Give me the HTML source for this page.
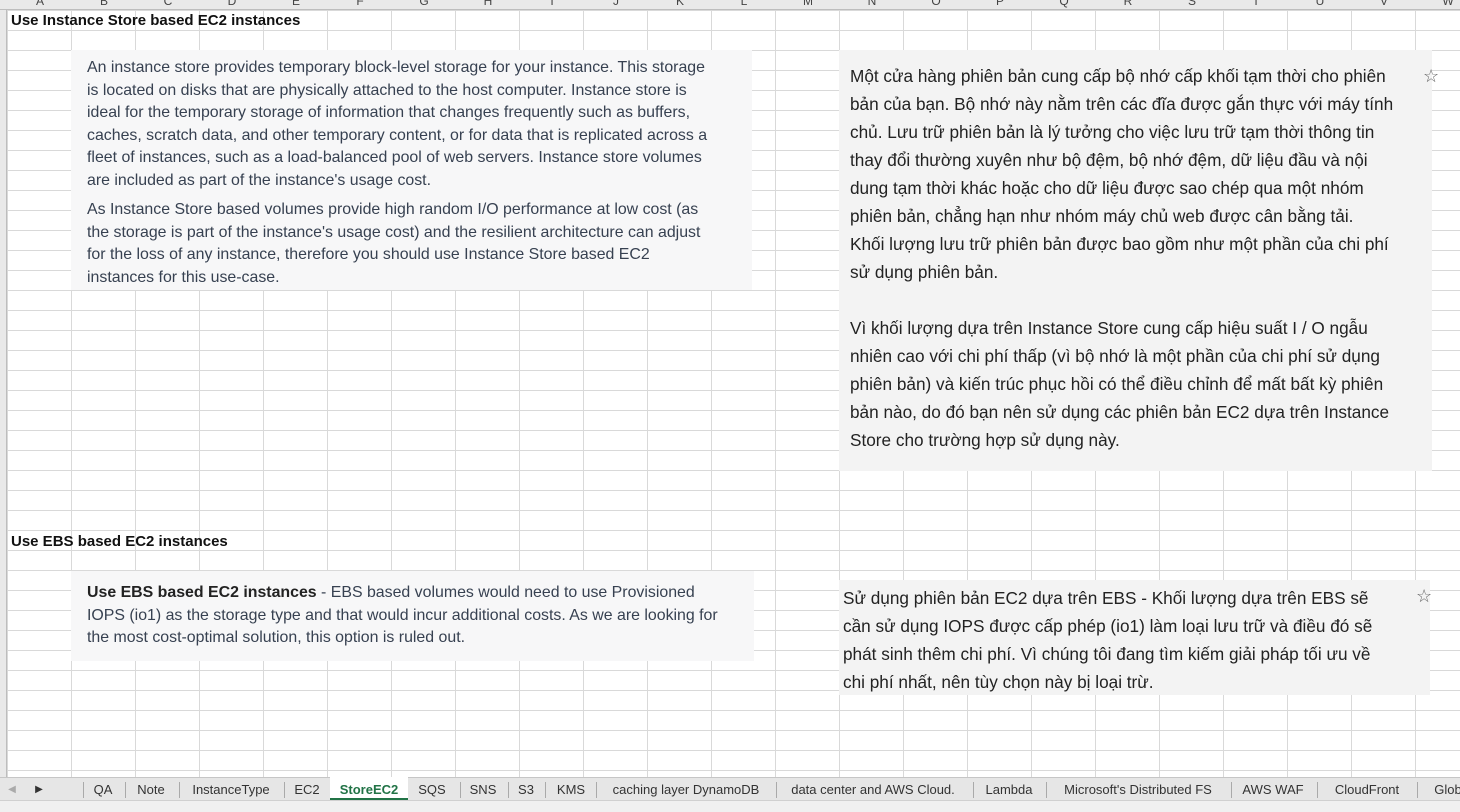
<!DOCTYPE html>
<html><head><meta charset="utf-8"><style>
*{margin:0;padding:0;box-sizing:border-box}
body{width:1460px;height:812px;overflow:hidden;background:#fff;position:relative;font-family:"Liberation Sans",sans-serif}
.grid{position:absolute;left:7px;top:10px;width:1453px;height:767px;
background-image:linear-gradient(to right,#d9d9d9 1px,transparent 1px),linear-gradient(to bottom,#d9d9d9 1px,transparent 1px);
background-size:64px 20px;background-position:0 0}
.colh{position:absolute;left:0;top:0;width:1460px;height:10px;background:#e9e9e9;border-bottom:1px solid #bdbdbd;overflow:hidden}
.colh span{position:absolute;top:-6px;font-size:12px;color:#444;width:64px;text-align:center}
.rowh{position:absolute;left:0;top:10px;width:7px;height:767px;background:#e9e9e9;border-right:1px solid #bdbdbd}
.b{position:absolute;font-weight:bold;font-size:15px;color:#111}
.p{position:absolute;background:#f7f7f8;color:#374151;font-size:15.9px;line-height:22.5px;white-space:nowrap}
.r{position:absolute;background:#f3f3f3;color:#222;font-size:17.2px;line-height:28px;white-space:pre}
.tabs{position:absolute;left:0;top:777px;width:1460px;height:23px;background:#e6e6e6;border-top:1px solid #c6c6c6;font-size:13px;color:#333}
.tabs span{position:absolute;top:4px;transform:translateX(-50%);white-space:nowrap}
.tabs i{position:absolute;top:4px;width:1px;height:16px;background:#aaa}
.bot{position:absolute;left:0;top:800px;width:1460px;height:12px;background:#f0f0f0;border-top:1px solid #d0d0d0}
.star{position:absolute;font-size:18px;color:#666}
</style></head><body>
<div class="grid"></div>
<div class="colh">
<span style="left:8px">A</span><span style="left:72px">B</span><span style="left:136px">C</span><span style="left:200px">D</span><span style="left:264px">E</span><span style="left:328px">F</span><span style="left:392px">G</span><span style="left:456px">H</span><span style="left:520px">I</span><span style="left:584px">J</span><span style="left:648px">K</span><span style="left:712px">L</span><span style="left:776px">M</span><span style="left:840px">N</span><span style="left:904px">O</span><span style="left:968px">P</span><span style="left:1032px">Q</span><span style="left:1096px">R</span><span style="left:1160px">S</span><span style="left:1224px">T</span><span style="left:1288px">U</span><span style="left:1352px">V</span><span style="left:1416px">W</span>
</div>
<div class="rowh"></div>
<div class="b" style="left:11px;top:12px">Use Instance Store based EC2 instances</div>
<div class="p" style="left:71px;top:50px;width:681px;height:240px;padding:7px 0 0 16px">
<div>An instance store provides temporary block-level storage for your instance. This storage<br>is located on disks that are physically attached to the host computer. Instance store is<br>ideal for the temporary storage of information that changes frequently such as buffers,<br>caches, scratch data, and other temporary content, or for data that is replicated across a<br>fleet of instances, such as a load-balanced pool of web servers. Instance store volumes<br>are included as part of the instance's usage cost.</div>
<div style="margin-top:7px">As Instance Store based volumes provide high random I/O performance at low cost (as<br>the storage is part of the instance's usage cost) and the resilient architecture can adjust<br>for the loss of any instance, therefore you should use Instance Store based EC2<br>instances for this use-case.</div>
</div>
<div class="r" style="left:839px;top:50px;width:593px;height:421px;padding:12px 0 0 11px">Một cửa hàng phiên bản cung cấp bộ nhớ cấp khối tạm thời cho phiên
bản của bạn. Bộ nhớ này nằm trên các đĩa được gắn thực với máy tính
chủ. Lưu trữ phiên bản là lý tưởng cho việc lưu trữ tạm thời thông tin
thay đổi thường xuyên như bộ đệm, bộ nhớ đệm, dữ liệu đầu và nội
dung tạm thời khác hoặc cho dữ liệu được sao chép qua một nhóm
phiên bản, chẳng hạn như nhóm máy chủ web được cân bằng tải.
Khối lượng lưu trữ phiên bản được bao gồm như một phần của chi phí
sử dụng phiên bản.

Vì khối lượng dựa trên Instance Store cung cấp hiệu suất I / O ngẫu
nhiên cao với chi phí thấp (vì bộ nhớ là một phần của chi phí sử dụng
phiên bản) và kiến trúc phục hồi có thể điều chỉnh để mất bất kỳ phiên
bản nào, do đó bạn nên sử dụng các phiên bản EC2 dựa trên Instance
Store cho trường hợp sử dụng này.</div>
<div class="star" style="left:1423px;top:66px">☆</div>
<div class="b" style="left:11px;top:533px">Use EBS based EC2 instances</div>
<div class="p" style="left:71px;top:571px;width:683px;height:90px;padding:11px 0 0 16px"><b style="color:#222">Use EBS based EC2 instances</b> - EBS based volumes would need to use Provisioned<br>IOPS (io1) as the storage type and that would incur additional costs. As we are looking for<br>the most cost-optimal solution, this option is ruled out.</div>
<div class="r" style="left:839px;top:580px;width:591px;height:115px;padding:4px 0 0 4px">Sử dụng phiên bản EC2 dựa trên EBS - Khối lượng dựa trên EBS sẽ
cần sử dụng IOPS được cấp phép (io1) làm loại lưu trữ và điều đó sẽ
phát sinh thêm chi phí. Vì chúng tôi đang tìm kiếm giải pháp tối ưu về
chi phí nhất, nên tùy chọn này bị loại trừ.</div>
<div class="star" style="left:1416px;top:586px">☆</div>
<div class="tabs">
<span style="left:12px;color:#aaa;font-size:10px;top:6px">◀</span><span style="left:39px;font-size:10px;top:6px">▶</span>
<i style="left:83px"></i><span style="left:103px">QA</span><i style="left:125px"></i><span style="left:151px">Note</span><i style="left:179px"></i><span style="left:231px">InstanceType</span><i style="left:284px"></i><span style="left:307px">EC2</span>
<div style="position:absolute;left:330px;top:-1px;width:78px;height:24px;background:#fff;border-bottom:3px solid #217346"></div>
<span style="left:369px;color:#217346;font-weight:bold">StoreEC2</span>
<span style="left:432px">SQS</span><i style="left:460px"></i><span style="left:483px">SNS</span><i style="left:508px"></i><span style="left:526px">S3</span><i style="left:545px"></i><span style="left:571px">KMS</span><i style="left:596px"></i><span style="left:686px">caching layer DynamoDB</span><i style="left:776px"></i><span style="left:873px">data center and AWS Cloud.</span><i style="left:973px"></i><span style="left:1009px">Lambda</span><i style="left:1046px"></i><span style="left:1138px">Microsoft's Distributed FS</span><i style="left:1231px"></i><span style="left:1273px">AWS WAF</span><i style="left:1317px"></i><span style="left:1367px">CloudFront</span><i style="left:1417px"></i><span style="left:1448px">Glob</span>
</div>
<div class="bot"></div>
</body></html>
